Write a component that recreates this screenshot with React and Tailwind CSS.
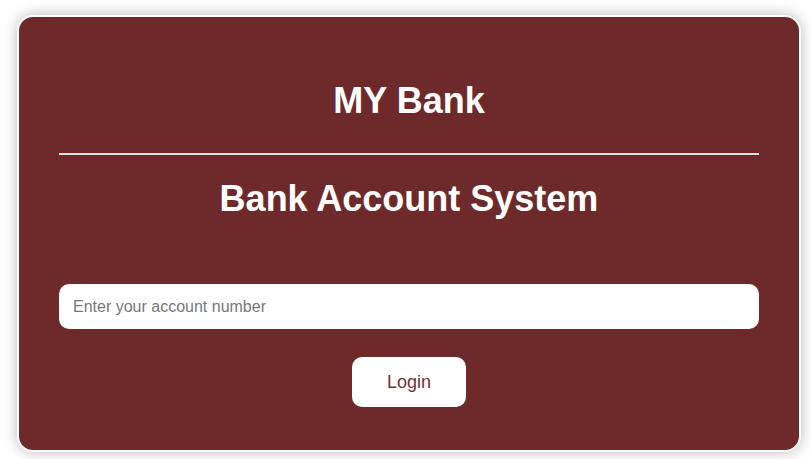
export default function App() {
  return (
    <div className="min-h-[459px] w-[811px] bg-white pt-[15px] pl-[17px]" style={{ fontFamily: '"Liberation Sans", Arial, sans-serif' }}>
      <div className="flex h-[437px] w-[784px] flex-col items-center rounded-[16px] border-2 border-white bg-[#6e2a2b] px-[40px] pt-[63px] shadow-[0_0_14px_rgba(0,0,0,0.28)]">
        <h1 className="text-[36px] font-bold leading-[41px] text-white">MY Bank</h1>
        <div className="mt-[32px] h-[2px] w-full bg-[#dde1e6]" />
        <h2 className="mt-[23px] text-[36px] font-bold leading-[41px] text-white">Bank Account System</h2>
        <input
          type="text"
          placeholder="Enter your account number"
          className="mt-[65px] h-[45px] w-full rounded-[10px] bg-white px-[14px] text-[16px] text-gray-800 outline-none placeholder:text-[#777777]"
        />
        <button className="mt-[28px] h-[50px] w-[114px] rounded-[10px] bg-white text-[18px] text-[#74302f]">Login</button>
      </div>
    </div>
  );
}
